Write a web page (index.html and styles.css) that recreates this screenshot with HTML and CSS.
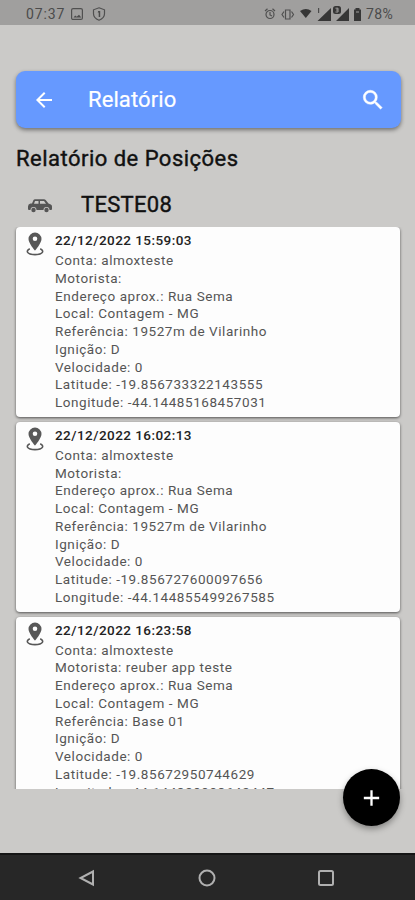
FILE: index.html
```html
<!DOCTYPE html>
<html lang="pt-BR">
<head>
<meta charset="utf-8">
<title>Relatório</title>
<link rel="stylesheet" href="styles.css">
</head>
<body>

<svg class="defs">
  <symbol id="pin" viewBox="0 0 18 24">
    <path fill-rule="evenodd" d="M9 0.500a6.500 6.500 0 0 0-6.500 6.500C2.500 11.200 9 18.700 9 18.700s6.500-7.500 6.500-11.700A6.500 6.500 0 0 0 9 0.500zM9 4.500a2.300 2.300 0 1 1 0 4.600a2.300 2.300 0 0 1 0-4.600z"/>
    <path class="ring" d="M3.800 16.800C-0.500 18.700 0.500 22.600 9 22.600s9.500-3.900 5.200-5.800"/>
  </symbol>
</svg>

<div class="status">
  <span class="clock">07:37</span>
  <svg class="st-left" width="38" height="16" viewBox="0 0 38 16">
    <rect class="line" x="1.600" y="2.600" width="10.800" height="10.800" rx="1.500"/>
    <path d="M3.500 11.500l1.700-2 1.500 1.200L9 8.800l2.300 2.700z"/>
    <path class="line" d="M29 1.800l5.500 2v4c0 3-2.300 5.200-5.500 6.400-3.200-1.200-5.500-3.400-5.500-6.400v-4z"/>
    <path d="M28.200 5h2v6h-1.500V6.500h-1z"/>
  </svg>
  <svg class="st-right" width="98" height="18" viewBox="0 0 98 18">
    <circle class="line" cx="6" cy="9.500" r="4"/>
    <path class="line" d="M6 7v3l2 1M1 6l2.500-2.200M11 6L8.500 3.800"/>
    <path class="line" d="M21.500 5h4.500v9h-4.500zM20 6.500l-2 3L20 12.500M27.500 6.500l2 3-2 3"/>
    <path class="solid" d="M36 6q6-4 11.500 0l-5.700 7z"/>
    <path d="M54 3h1.200v5H54z"/>
    <path class="solid" d="M53.500 16L67 3v13zM72 16L85 3v13z"/>
    <rect class="solid" x="69" y="1" width="8" height="8" rx="2.500"/>
    <path class="hole" d="M71.500 3.200h2.500v3.800h-2.500M72 5h2"/>
    <path class="solid" d="M91.500 3h4v1.500H97V16h-7V4.500h1.500z"/>
    <path class="hole" d="M92 7h3"/>
  </svg>
  <span class="battery">78%</span>
</div>

<main class="screen">
  <header class="topbar">
    <svg class="back" width="24" height="24" viewBox="0 0 24 24"><path d="M20 11H7.830l5.590-5.590L12 4l-8 8 8 8 1.410-1.410L7.830 13H20z"/></svg>
    <h1>Relatório</h1>
    <svg class="search" width="26" height="26" viewBox="0 0 24 24"><path d="M15.500 14h-.79l-.28-.27A6.470 6.470 0 0 0 16 9.500 6.500 6.500 0 1 0 9.500 16c1.610 0 3.090-.59 4.230-1.570l.27.28v.79l5 4.990L20.490 19zM9.500 14a4.500 4.500 0 1 1 0-9 4.500 4.500 0 0 1 0 9z"/></svg>
  </header>

  <h2>Relatório de Posições</h2>

  <div class="vehicle">
    <svg class="car" width="26" height="16" viewBox="0 0 26 16">
      <path fill-rule="evenodd" d="M6.500 2Q7 1.300 8 1.300h9q1 0 1.700.8L21.500 5.500l2.300 1q1.200.6 1.200 2V11q0 1-1 1h-1.500a3 3 0 0 0-6 0h-7a3 3 0 0 0-6 0H2q-1 0-1-1V8.500Q1 6 3.500 5.500H5zM8 3L7 5.800h4.500V3zM13 3v2.800h6L17 3z"/>
      <circle cx="6.500" cy="12" r="2.200"/>
      <circle cx="19.500" cy="12" r="2.200"/>
    </svg>
    <span>TESTE08</span>
  </div>

  <div class="list">
    <div class="card">
      <svg class="pin" width="18" height="24"><use href="#pin"/></svg>
      <div class="info">
        <h3>22/12/2022 15:59:03</h3>
        <p>Conta: almoxteste</p>
        <p>Motorista:</p>
        <p>Endereço aprox.: Rua Sema</p>
        <p>Local: Contagem - MG</p>
        <p>Referência: 19527m de Vilarinho</p>
        <p>Ignição: D</p>
        <p>Velocidade: 0</p>
        <p>Latitude: -19.856733322143555</p>
        <p>Longitude: -44.14485168457031</p>
      </div>
    </div>

    <div class="card">
      <svg class="pin" width="18" height="24"><use href="#pin"/></svg>
      <div class="info">
        <h3>22/12/2022 16:02:13</h3>
        <p>Conta: almoxteste</p>
        <p>Motorista:</p>
        <p>Endereço aprox.: Rua Sema</p>
        <p>Local: Contagem - MG</p>
        <p>Referência: 19527m de Vilarinho</p>
        <p>Ignição: D</p>
        <p>Velocidade: 0</p>
        <p>Latitude: -19.856727600097656</p>
        <p>Longitude: -44.144855499267585</p>
      </div>
    </div>

    <div class="card">
      <svg class="pin" width="18" height="24"><use href="#pin"/></svg>
      <div class="info">
        <h3>22/12/2022 16:23:58</h3>
        <p>Conta: almoxteste</p>
        <p>Motorista: reuber app teste</p>
        <p>Endereço aprox.: Rua Sema</p>
        <p>Local: Contagem - MG</p>
        <p>Referência: Base 01</p>
        <p>Ignição: D</p>
        <p>Velocidade: 0</p>
        <p>Latitude: -19.85672950744629</p>
        <p>Longitude: -44.144829998642447</p>
      </div>
    </div>
  </div>

  <button class="fab" aria-label="Adicionar">
    <svg width="24" height="24" viewBox="0 0 24 24"><path d="M20 13.200h-6.800V20h-2.400v-6.800H4v-2.400h6.800V4h2.400v6.800H20z"/></svg>
  </button>
</main>

<nav class="navbar">
  <svg width="18" height="18" viewBox="0 0 18 18"><path d="M15 2.500v13L2.500 9z"/></svg>
  <svg width="18" height="18" viewBox="0 0 18 18"><circle cx="9" cy="9" r="7.500"/></svg>
  <svg width="18" height="18" viewBox="0 0 18 18"><rect x="2" y="2" width="14" height="14" rx="1.500"/></svg>
</nav>

</body>
</html>
```

FILE: styles.css
```css
* {
  box-sizing: border-box;
}
body {
  margin: 0;
  height: 900px;
  display: flex;
  flex-direction: column;
  overflow: hidden;
  background: #cbcac8;
  font-family: Roboto, "Liberation Sans", sans-serif;
}
h1, h2, h3, p {
  margin: 0;
  white-space: nowrap;
}
.defs {
  display: none;
}

/* barra de status */
.status {
  flex: none;
  height: 25px;
  padding: 3px 20px 0 26px;
  display: flex;
  align-items: center;
  background: #a09f9e;
  color: #4b4b4b;
  font-size: 14px;
  line-height: 20px;
}
.clock {
  width: 44px;
  letter-spacing: .9px;
}
.st-right {
  margin-left: auto;
  margin-right: 4px;
}
.battery {
  width: 29px;
  letter-spacing: .4px;
}
.status path, .status rect {
  fill: #4b4b4b;
}
.status .solid {
  fill: #363636;
}
.status .line {
  fill: none;
  stroke: #505050;
  stroke-width: 1.2;
}
.status .hole {
  fill: none;
  stroke: #a09f9e;
}

/* conteudo */
.screen {
  position: relative;
  flex: none;
  height: 828px;
  padding: 46px 14px 0 16px;
}
.topbar {
  height: 57px;
  padding: 0 15px 0 16px;
  display: flex;
  align-items: center;
  border-radius: 9px;
  background: #6699ff;
  box-shadow: 0 2px 4px rgba(0,0,0,.45);
}
.topbar svg {
  fill: #fff;
}
.topbar .search {
  margin-left: auto;
  stroke: #fff;
  stroke-width: .4;
}
.topbar h1 {
  margin-left: 32px;
  color: #fff;
  font-size: 22px;
  font-weight: 400;
  letter-spacing: .1px;
  -webkit-text-stroke: .2px #fff;
}
h2 {
  height: 60px;
  line-height: 62px;
  color: #111;
  font-size: 22px;
  font-weight: 400;
  letter-spacing: .48px;
  -webkit-text-stroke: .4px #111;
}
.vehicle {
  height: 39px;
  padding: 0 0 7px 11px;
  display: flex;
  align-items: center;
  color: #111;
  font-size: 22px;
  font-weight: 400;
  letter-spacing: .3px;
  -webkit-text-stroke: .4px #111;
}
.vehicle span {
  margin-left: 28px;
}
.car {
  margin-top: 3px;
  fill: #555;
}

/* lista de posicoes */
.list {
  height: 562px;
  margin: 0 -10px;
  padding: 0 11px 0 10px;
  overflow: hidden;
}
.card {
  height: 190px;
  margin-bottom: 4.8px;
  padding: 5px 9px 5px 10px;
  display: flex;
  align-items: flex-start;
  border-radius: 4px;
  background: #fdfdfd;
  box-shadow: 0 1px 3px rgba(0,0,0,.6);
}
.pin {
  fill: #585858;
}
.ring {
  fill: none;
  stroke: #585858;
  stroke-width: 1.6;
}
.info {
  margin-left: 11px;
  color: #555;
  font-size: 13.5px;
  line-height: 17.75px;
}
.info h3 {
  height: 20px;
  color: #222;
  font-size: 13.5px;
  font-weight: 500;
  letter-spacing: .45px;
}
.info p {
  letter-spacing: .56px;
}

.fab {
  position: absolute;
  right: 15px;
  bottom: 27px;
  width: 57px;
  height: 57px;
  padding: 0;
  display: flex;
  align-items: center;
  justify-content: center;
  border: 0;
  border-radius: 50%;
  background: #000;
  box-shadow: 0 3px 6px rgba(0,0,0,.35);
}
.fab svg {
  width: 23px;
  fill: #fff;
}

/* navegacao do android */
.navbar {
  flex: 1;
  padding: 0 80px 0 78px;
  display: flex;
  align-items: center;
  justify-content: space-between;
  background: #272727;
  border-top: 2px solid #151515;
}
.navbar svg {
  fill: none;
  stroke: #b0b0b0;
  stroke-width: 2;
}
```
